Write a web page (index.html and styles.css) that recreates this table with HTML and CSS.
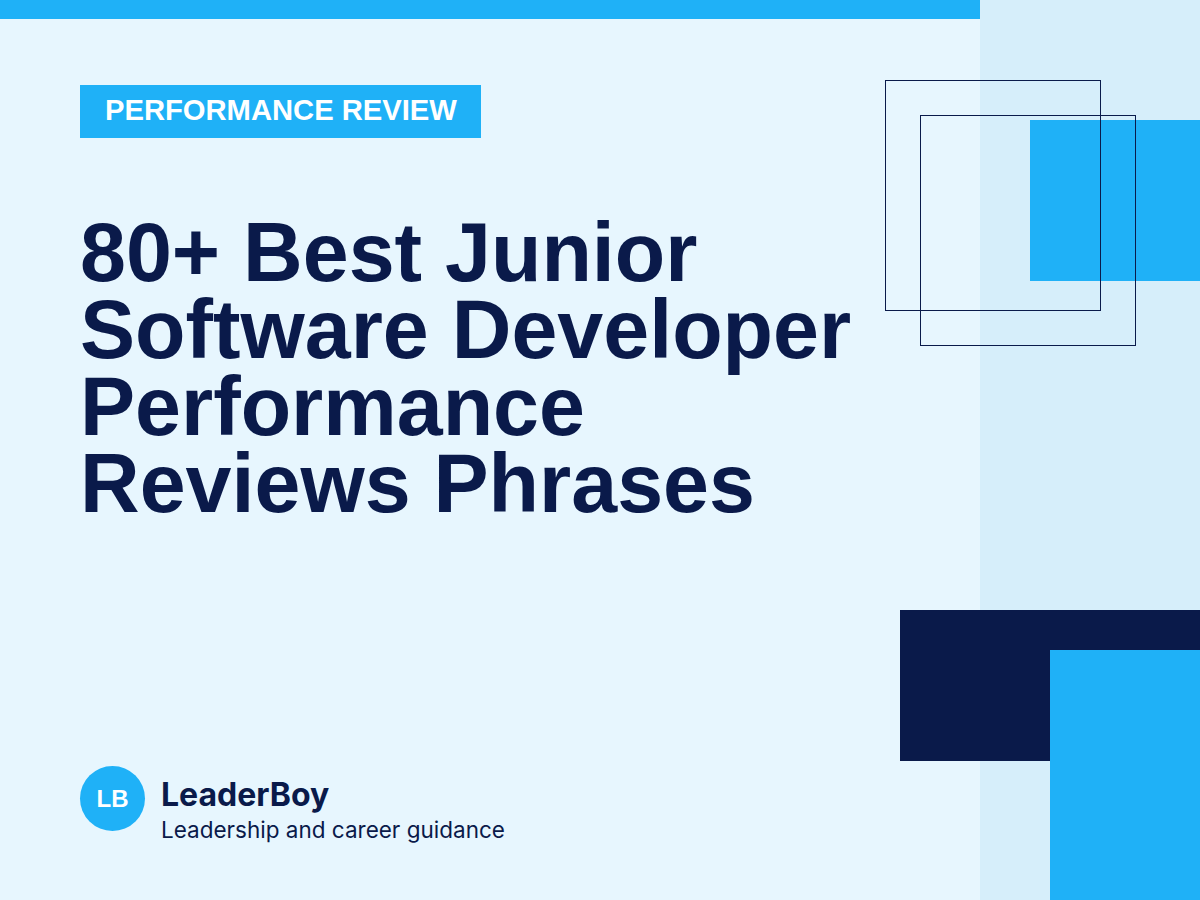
FILE: index.html
```html
<!DOCTYPE html>
<html lang="en">
<head>
<meta charset="utf-8">
<title>80+ Best Junior Software Developer Performance Reviews Phrases</title>
<link rel="stylesheet" href="styles.css">
</head>
<body>
<div class="page">
  <main class="main">
    <div class="topbar"></div>
    <div class="content">
      <span class="tag">PERFORMANCE REVIEW</span>
      <h1 class="title">80+ Best Junior<br>Software Developer<br>Performance<br>Reviews Phrases</h1>
      <div class="brand">
        <div class="logo">LB</div>
        <div class="brand-text">
          <div class="brand-name">LeaderBoy</div>
          <div class="brand-sub">Leadership and career guidance</div>
        </div>
      </div>
    </div>
  </main>
  <aside class="side"></aside>
  <div class="shape blue-top"></div>
  <div class="shape frame frame-a"></div>
  <div class="shape frame frame-b"></div>
  <div class="shape navy-block"></div>
  <div class="shape blue-bottom"></div>
</div>
</body>
</html>
```

FILE: styles.css
```css
* { box-sizing: border-box; }

html, body {
  margin: 0;
  padding: 0;
}

body {
  width: 1200px;
  height: 900px;
  overflow: hidden;
  background: #e7f6fe;
  font-family: "Liberation Sans", Arial, sans-serif;
}

.page {
  position: relative;
  width: 1200px;
  height: 900px;
  display: flex;
}

.main {
  width: 980px;
  height: 900px;
  display: flex;
  flex-direction: column;
  background: #e7f6fe;
}

.topbar {
  height: 19px;
  background: #1fb1f7;
  flex: none;
}

.content {
  flex: 1;
  display: flex;
  flex-direction: column;
  align-items: flex-start;
  padding: 66px 0 56px 80px;
}

.tag {
  display: inline-block;
  background: #1fb1f7;
  color: #ffffff;
  font-weight: 700;
  font-size: 29.2px;
  line-height: 33px;
  padding: 9px 24px 11px 25px;
}

.title {
  margin: 76px 0 0 0;
  font-family: "Liberation Sans", Arial, sans-serif;
  font-weight: 700;
  font-size: 82.6px;
  line-height: 77px;
  color: #0a1a4a;
}

.brand {
  margin-top: auto;
  display: flex;
  align-items: flex-start;
  gap: 16px;
}

.logo {
  width: 65px;
  height: 65px;
  border-radius: 50%;
  background: #1fb1f7;
  color: #ffffff;
  display: flex;
  align-items: center;
  justify-content: center;
  font-family: "Liberation Sans", Arial, sans-serif;
  font-weight: 700;
  font-size: 24px;
  flex: none;
}

.brand-text {
  display: flex;
  flex-direction: column;
  gap: 1px;
  padding-top: 9px;
  color: #0a1a4a;
  font-family: Inter, "Liberation Sans", sans-serif;
}

.brand-name {
  font-weight: 700;
  font-size: 32px;
  line-height: 40px;
}

.brand-sub {
  font-weight: 400;
  font-size: 22.5px;
  line-height: 28px;
}

.side {
  width: 220px;
  height: 900px;
  background: #d6eefa;
}

.shape {
  position: absolute;
}

.blue-top {
  left: 1030px;
  top: 120px;
  width: 170px;
  height: 161px;
  background: #1fb1f7;
}

.frame {
  width: 216px;
  height: 231px;
  border: 1.5px solid #0a1a4a;
}

.frame-a {
  left: 885px;
  top: 80px;
}

.frame-b {
  left: 920px;
  top: 115px;
}

.navy-block {
  left: 900px;
  top: 610px;
  width: 300px;
  height: 151px;
  background: #0a1a4a;
}

.blue-bottom {
  left: 1050px;
  top: 650px;
  width: 150px;
  height: 250px;
  background: #1fb1f7;
}
```
